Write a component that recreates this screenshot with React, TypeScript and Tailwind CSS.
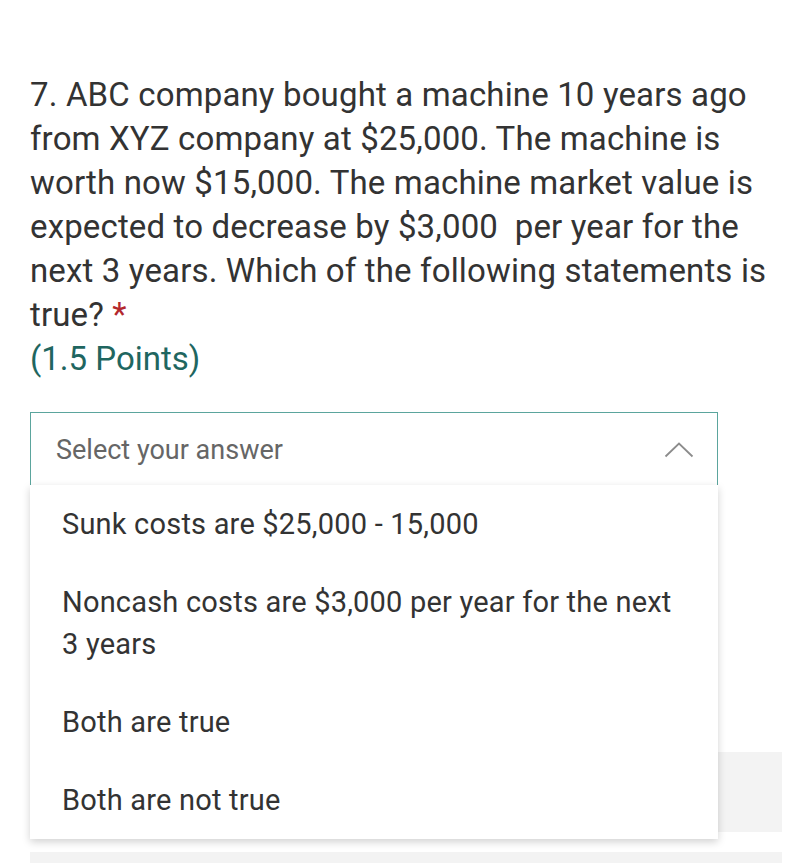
import React from 'react';

const options: string[][] = [
  ['Sunk costs are $25,000 - 15,000'],
  ['Noncash costs are $3,000 per year for the next', '3 years'],
  ['Both are true'],
  ['Both are not true'],
];

const questionLines = [
  '7. ABC company bought a machine 10 years ago',
  'from XYZ company at $25,000. The machine is',
  'worth now $15,000. The machine market value is',
  'expected to decrease by $3,000\u00a0 per year for the',
  'next 3 years. Which of the following statements is',
];

const App: React.FC = () => {
  return (
    <div className="min-h-[863px] w-[810px] overflow-hidden bg-white font-['Roboto',sans-serif] text-[#333333]">
      <div className="pl-[30px] pt-[73px]">
        <div className="text-[33px] leading-[44px] tracking-[0.15px]">
          {questionLines.map((line) => (
            <div key={line} className="whitespace-nowrap">{line}</div>
          ))}
          <div>
            true? <span className="text-[#b3282d]">*</span>
          </div>
        </div>
        <div className="text-[33px] leading-[44px] text-[#1f6660]">(1.5 Points)</div>

        <div className="relative mt-[31px]">
          <div className="flex h-[76px] w-[688px] items-center justify-between border border-[#5ba59d] pl-[25px] pr-[23px]">
            <span className="text-[27px] text-[#666666]">Select your answer</span>
            <svg width="30" height="17" viewBox="0 0 30 17" fill="none" className="-mt-[2px]">
              <path d="M1.5 15.5 L15 2.5 L28.5 15.5" stroke="#8c8c8c" strokeWidth="1.8" />
            </svg>
          </div>

          <div className="mt-[264px] h-[80px] w-[752px] bg-[#f3f3f3]" />
          <div className="mt-[20px] h-[40px] w-[752px] bg-[#f3f3f3]" />

          <div className="absolute left-0 top-[73px] w-[688px] bg-white shadow-[0_3px_8px_rgba(0,0,0,0.18)]">
            {options.map((lines, i) => (
              <div key={i} className="px-[32px] py-[18px] text-[29px] leading-[42px] tracking-[0.2px] text-[#333333]">
                {lines.map((l) => (
                  <div key={l} className="whitespace-nowrap">{l}</div>
                ))}
              </div>
            ))}
          </div>
        </div>
      </div>
    </div>
  );
};

export default App;
